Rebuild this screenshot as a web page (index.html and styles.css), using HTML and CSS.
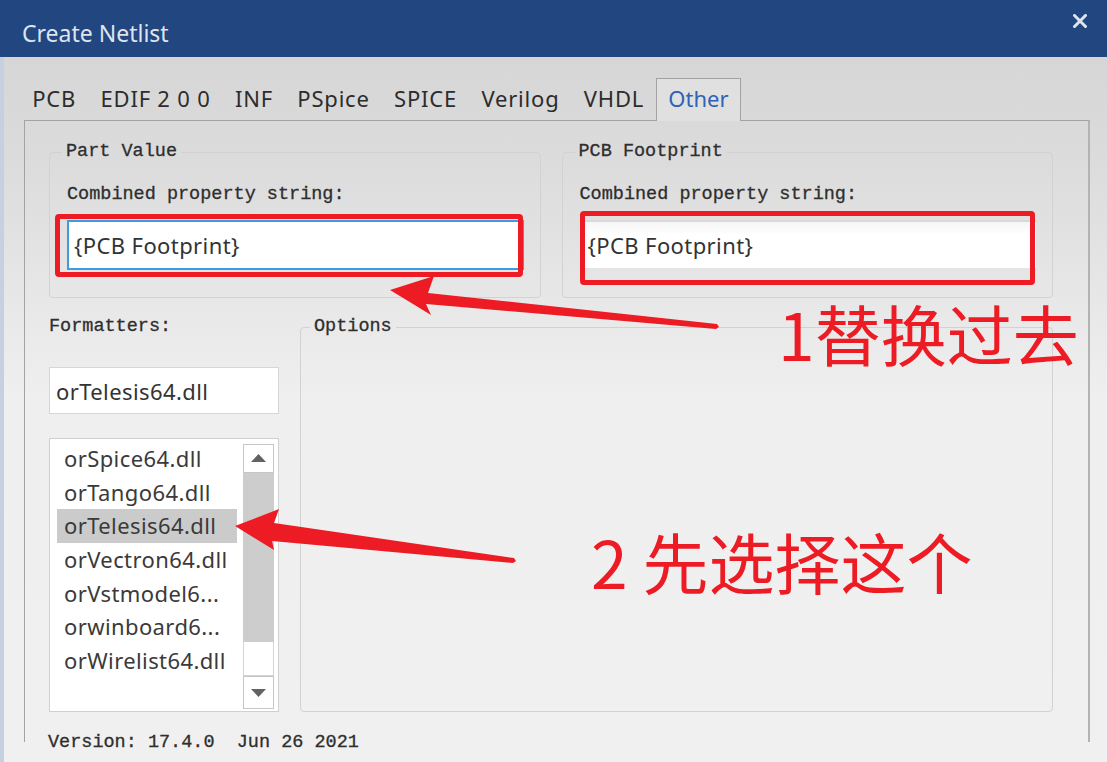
FILE: index.html
```html
<!DOCTYPE html>
<html>
<head>
<meta charset="utf-8">
<title>Create Netlist</title>
<link rel="stylesheet" href="styles.css">
</head>
<body>
<div class="window">
  <div class="titlebar">
    <span class="title">Create Netlist</span>
    <svg class="close" width="14" height="14" viewBox="0 0 14 14"><path d="M1.5 1.5 L12.5 12.5 M12.5 1.5 L1.5 12.5" stroke="#dfe5ee" stroke-width="3" stroke-linecap="square"/></svg>
  </div>
  <div class="dialog">
    <div class="tabs">
      <span class="tab">PCB</span>
      <span class="tab">EDIF 2 0 0</span>
      <span class="tab">INF</span>
      <span class="tab">PSpice</span>
      <span class="tab">SPICE</span>
      <span class="tab">Verilog</span>
      <span class="tab">VHDL</span>
      <span class="tab active">Other</span>
    </div>
    <div class="panel">
      <div class="row-top">
        <fieldset class="group">
          <legend class="mono">Part Value</legend>
          <div class="mono label">Combined property string:</div>
          <div class="field focus">{PCB Footprint}</div>
        </fieldset>
        <fieldset class="group">
          <legend class="mono">PCB Footprint</legend>
          <div class="mono label">Combined property string:</div>
          <div class="field plain">{PCB Footprint}</div>
        </fieldset>
      </div>
      <div class="row-bottom">
        <div class="formatters">
          <div class="mono">Formatters:</div>
          <div class="field small">orTelesis64.dll</div>
          <div class="listbox">
            <div class="items">
              <div class="item">orSpice64.dll</div>
              <div class="item">orTango64.dll</div>
              <div class="item selected">orTelesis64.dll</div>
              <div class="item">orVectron64.dll</div>
              <div class="item">orVstmodel6...</div>
              <div class="item">orwinboard6...</div>
              <div class="item">orWirelist64.dll</div>
            </div>
            <div class="scrollbar">
              <div class="sb-btn"><svg width="15" height="8" viewBox="0 0 15 8"><polygon points="7.5,0 15,8 0,8" fill="#626262"/></svg></div>
              <div class="sb-thumb"></div>
              <div class="sb-track"></div>
              <div class="sb-btn down"><svg width="15" height="8" viewBox="0 0 15 8"><polygon points="0,0 15,0 7.5,8" fill="#626262"/></svg></div>
            </div>
          </div>
        </div>
        <fieldset class="group options">
          <legend class="mono">Options</legend>
        </fieldset>
      </div>
      <div class="mono version">Version: 17.4.0  Jun 26 2021</div>
    </div>
  </div>

  <div class="anno-box box1"></div>
  <div class="anno-box box2"></div>
  <svg class="arrows" width="1107" height="762" viewBox="0 0 1107 762">
    <polygon points="390,290 434,276 428,293 717,324 719,327 716,329 426,304 431,315" fill="#ed1c24"/>
    <polygon points="235,526 279,509 274,523 514,558 516,561 513,563 272,541 274,550" fill="#ed1c24"/>
  </svg>
  <div class="anno-text t1">1替换过去</div>
  <div class="anno-text t2">2 先选择这个</div>
</div>
</body>
</html>
```

FILE: styles.css
```css
html, body {
  margin: 0;
  padding: 0;
}
body {
  width: 1107px;
  height: 762px;
  overflow: hidden;
  background: #f0f0f0;
  font-family: "Noto Sans", "Liberation Sans", sans-serif;
}
.window {
  position: relative;
  width: 1107px;
  height: 762px;
  overflow: hidden;
}
.titlebar {
  height: 57px;
  background: #22467f;
  display: flex;
  justify-content: space-between;
  align-items: flex-start;
  padding: 0 20px 0 22px;
  box-sizing: border-box;
}
.title {
  margin-top: 18px;
  font-size: 23px;
  line-height: 30px;
  color: #dde4ee;
}
.close {
  margin-top: 14px;
}
.dialog {
  height: 705px;
  box-sizing: border-box;
  border-left: 4px solid #c5d1e1;
  padding: 21px 17px 0 20px;
  background: linear-gradient(#d6d6d6 0px, #dcdcdc 110px, #e8e8e8 250px, #efefef 340px, #f0f0f0 100%);
}
.tabs {
  display: flex;
  height: 42px;
  margin-left: -4px;
}
.tab {
  font-size: 22px;
  line-height: 30px;
  letter-spacing: 0.8px;
  color: #2c2c2c;
  padding: 3.5px 11.2px 6.5px;
  border: 1px solid transparent;
  border-bottom: none;
  white-space: nowrap;
}
.tab.active {
  position: relative;
  z-index: 1;
  margin-bottom: -1px;
  letter-spacing: 0;
  color: #2f62b6;
  background: #e0e0e0;
  border-color: #a2a2a2;
  padding-left: 11px;
  padding-right: 11px;
}
.panel {
  border: 1px solid #a3a3a3;
  border-right: 2px solid #b3b3b3;
  border-bottom: none;
  height: 600px;
  padding: 21px 35px 0 24px;
}
.mono {
  font-family: "Liberation Mono", "Courier New", monospace;
  font-size: 18.5px;
  line-height: 20px;
  color: #2e2e2e;
  white-space: pre;
  -webkit-text-stroke: 0.3px #2e2e2e;
}
.row-top {
  display: grid;
  grid-template-columns: 1fr 1fr;
  column-gap: 21px;
}
.group {
  margin: 0;
  min-width: 0;
  border: 1px solid #d2d2d2;
  border-radius: 4px;
  padding: 23px 16px 27px 17px;
}
.group legend {
  padding: 0 4px;
  margin-left: -5px;
}
.label {
  margin-bottom: 15px;
}
.field {
  height: 50px;
  box-sizing: border-box;
  background: #ffffff;
  font-size: 22px;
  letter-spacing: 0.4px;
  color: #333333;
  display: flex;
  align-items: center;
  white-space: nowrap;
}
.field.focus {
  border: 2px solid #3f9be0;
  padding-left: 5px;
}
.field.plain {
  border-top: 2px solid #d9d9d9;
  border-bottom: 2px solid #e4e4e4;
  padding-left: 8px;
  background: linear-gradient(#f6f6f6, #ffffff 30%, #ffffff);
}
.row-bottom {
  display: grid;
  grid-template-columns: 230px 1fr;
  column-gap: 21px;
  margin-top: 19px;
}
.formatters {
  display: flex;
  flex-direction: column;
}
.field.small {
  margin-top: 30px;
  height: 47px;
  border: 1px solid #d6d6d6;
  padding-left: 6px;
}
.listbox {
  margin-top: 24px;
  height: 274px;
  box-sizing: border-box;
  background: #ffffff;
  border: 1px solid #d0d0d0;
  display: flex;
  padding: 2px 2px 2px 7px;
}
.items {
  width: 180px;
  padding-top: 1px;
}
.item {
  height: 33.7px;
  line-height: 33.7px;
  font-size: 22px;
  letter-spacing: 0.4px;
  color: #3a3a3a;
  padding-left: 7px;
  white-space: nowrap;
}
.item.selected {
  background: #cbcbcb;
}
.scrollbar {
  width: 31px;
  margin-left: 6px;
  margin-top: 3px;
  display: flex;
  flex-direction: column;
}
.sb-btn {
  height: 29px;
  box-sizing: border-box;
  border: 1px solid #c6c6c6;
  background: #ffffff;
  display: flex;
  align-items: center;
  justify-content: center;
}
.sb-btn.down {
  height: 33px;
}
.sb-thumb {
  height: 170px;
  background: #cdcdcd;
}
.sb-track {
  height: 34px;
  box-sizing: border-box;
  border: 1px solid #d4d4d4;
  border-top: none;
  background: #ffffff;
}
.options {
  padding: 0 12px;
}
.options legend {
  padding: 0 4px;
  margin-left: -3px;
}
.version {
  margin-top: 21px;
  margin-left: -1px;
}

/* annotations drawn over the screenshot */
.anno-box {
  position: absolute;
  box-sizing: border-box;
  border: 5px solid #ed1c24;
  border-radius: 4px;
}
.box1 {
  left: 55px;
  top: 214px;
  width: 468px;
  height: 63px;
}
.box2 {
  left: 580px;
  top: 211px;
  width: 455px;
  height: 74px;
}
.arrows {
  position: absolute;
  left: 0;
  top: 0;
  pointer-events: none;
}
.anno-text {
  position: absolute;
  font-family: "Noto Sans CJK SC", "Noto Sans", sans-serif;
  font-size: 66px;
  line-height: 66px;
  color: #ed1c24;
  white-space: nowrap;
}
.t1 {
  left: 778px;
  top: 299px;
}
.t2 {
  left: 591px;
  top: 527px;
}
```
